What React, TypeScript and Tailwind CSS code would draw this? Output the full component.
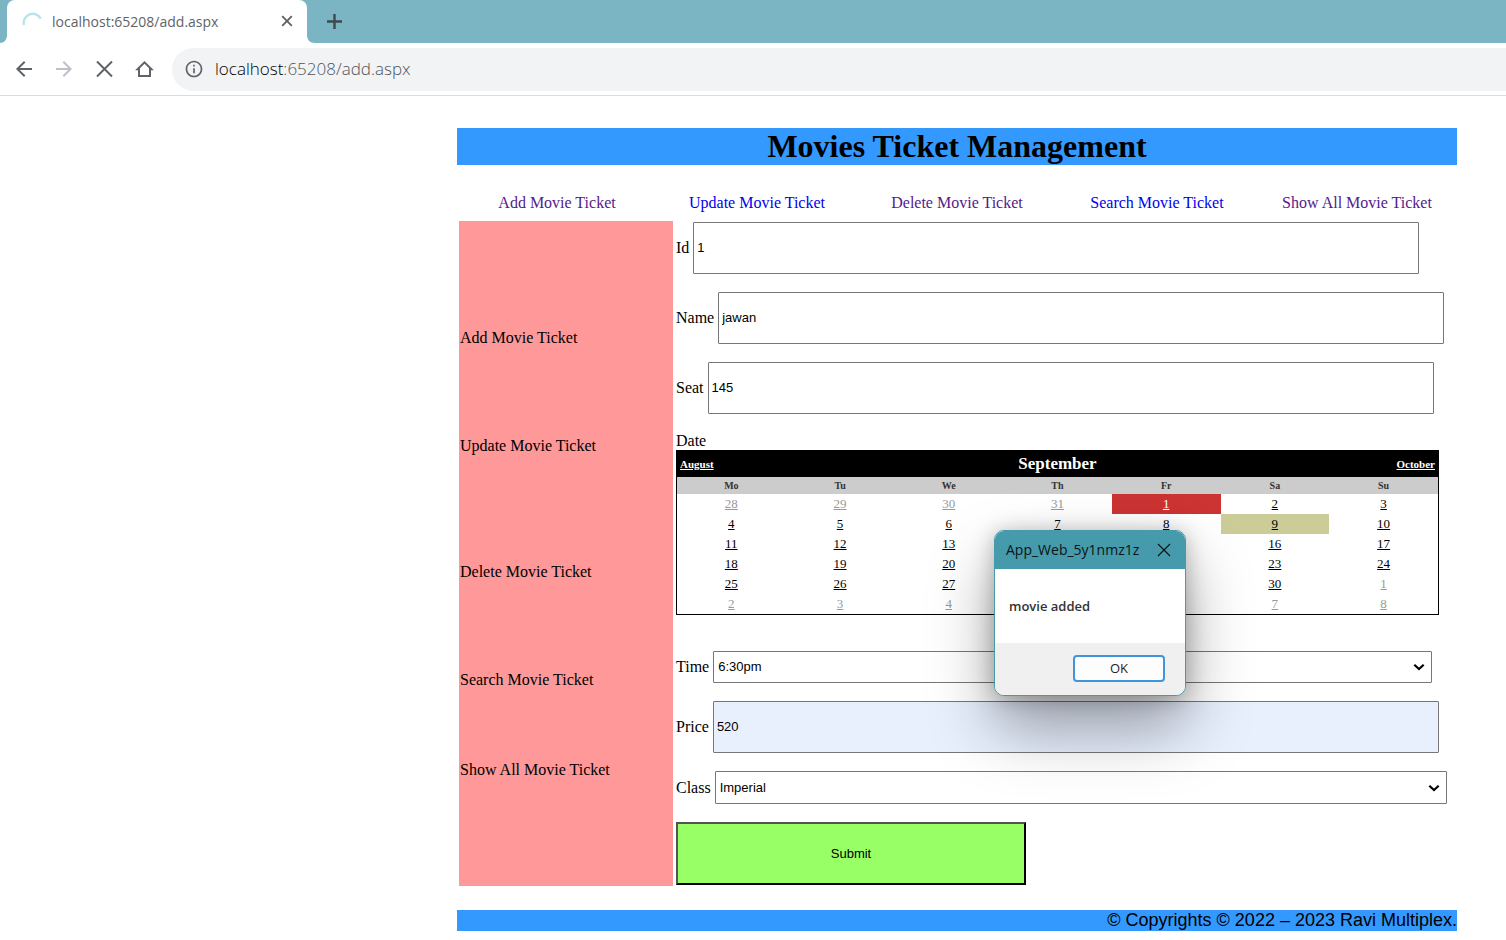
import { useId, type ReactNode } from "react";
import { MdArrowBack, MdArrowForward, MdInfoOutline } from "react-icons/md";

const serif = "font-['Liberation_Serif',serif]";
const sans = "font-['Liberation_Sans',sans-serif]";
const ui = "font-['Open_Sans',sans-serif]";

function BrowserTabs() {
  return (
    <div className="flex h-[43px] items-end bg-[#7bb5c4]">
      <svg width="7" height="8" className="shrink-0" aria-hidden="true">
        <path d="M0 8C4 8 7 5 7 0V8Z" fill="#fff" />
      </svg>
      <div className="flex h-[43px] w-[300px] shrink-0 items-center rounded-t-lg bg-white pr-3 pb-px pl-[15px]">
        <svg width="20" height="20" viewBox="0 0 20 20" fill="none" aria-hidden="true">
          <path d="M2 14A9 9 0 0 1 18.7 7.6" stroke="#b9e3ea" strokeWidth="2.4" />
        </svg>
        <span className="ml-[10px] grow text-[14px] text-[#5f6368]">localhost:65208/add.aspx</span>
        <button type="button" aria-label="Close tab" className="flex size-4 items-center justify-center">
          <svg width="12" height="12" viewBox="0 0 12 12" stroke="#5f6368" strokeWidth="1.9" aria-hidden="true">
            <path d="M1.2 1.2L10.8 10.8M10.8 1.2L1.2 10.8" />
          </svg>
        </button>
      </div>
      <svg width="8" height="8" className="shrink-0" aria-hidden="true">
        <path d="M0 0C0 5 3 8 8 8H0Z" fill="#fff" />
      </svg>
      <button type="button" aria-label="New tab" className="ml-3 flex h-[43px] w-4 items-center justify-center">
        <svg width="16" height="16" viewBox="0 0 16 16" stroke="#3c4a4e" strokeWidth="2.4" aria-hidden="true">
          <path d="M7.500 0V15M0 7.500H15" />
        </svg>
      </button>
    </div>
  );
}

function Toolbar() {
  return (
    <div className="flex h-[53px] items-center border-b border-[#dadce0] bg-white pl-3 text-[#5f6368]">
      <div className="flex shrink-0 gap-4">
        <button type="button" aria-label="Back"><MdArrowBack size={24} /></button>
        <button type="button" aria-label="Forward" className="text-[#bdc1c6]"><MdArrowForward size={24} /></button>
        <button type="button" aria-label="Stop loading">
          <svg width="24" height="24" viewBox="0 0 24 24" stroke="currentColor" strokeWidth="2" aria-hidden="true">
            <path d="M5 4.500L20 19.500M20 4.500L5 19.500" />
          </svg>
        </button>
        <button type="button" aria-label="Home">
          <svg width="24" height="24" viewBox="0 0 24 24" fill="none" stroke="currentColor" strokeWidth="2" aria-hidden="true">
            <path d="M7 12.200V19H18V12.200H19.500L12.500 5.300L5.500 12.200Z" />
          </svg>
        </button>
      </div>
      <div className="ml-4 flex h-[43px] grow items-center rounded-l-full bg-[#f1f3f4] pl-3">
        <MdInfoOutline size={20} aria-hidden="true" />
        <span className="ml-[11px] text-[17px] font-light text-[#50545a]">
          <span className="text-black">localhost</span>:65208/add.aspx
        </span>
      </div>
    </div>
  );
}

const links = [
  { text: "Add Movie Ticket", visited: true, space: "" },
  { text: "Update Movie Ticket", visited: false, space: "mt-[90px]" },
  { text: "Delete Movie Ticket", visited: true, space: "mt-[108px]" },
  { text: "Search Movie Ticket", visited: false, space: "mt-[90px]" },
  { text: "Show All Movie Ticket", visited: true, space: "mt-[72px]" },
];

function TextField({ label, value, filled }: { label: string; value: string; filled?: boolean }) {
  const id = useId();
  return (
    <div className="flex items-center gap-1">
      <label htmlFor={id}>{label}</label>
      <input
        id={id}
        defaultValue={value}
        className={`h-[52px] w-full max-w-[726px] min-w-0 rounded-[1px] border border-[#767676] px-[3px] pb-px text-[13px] ${sans} ${filled ? "bg-[#e8f0fe]" : "bg-white"}`}
      />
    </div>
  );
}

function SelectField({ label, value, size }: { label: string; value: string; size: string }) {
  const id = useId();
  return (
    <div className="flex items-center gap-1">
      <label htmlFor={id}>{label}</label>
      <div className={`relative w-full min-w-0 ${size}`}>
        <select
          id={id}
          defaultValue={value}
          className={`size-full appearance-none rounded-[1px] border border-[#767676] bg-white pr-6 pl-1 text-[13px] ${sans}`}
        >
          <option>{value}</option>
        </select>
        <svg
          viewBox="0 0 12 8"
          fill="none"
          stroke="#000"
          strokeWidth="2.2"
          className="pointer-events-none absolute inset-y-0 right-[7px] my-auto h-2 w-3"
          aria-hidden="true"
        >
          <path d="M1.300 1.700L6 6L10.700 1.700" />
        </svg>
      </div>
    </div>
  );
}

const weekdays = ["Mo", "Tu", "We", "Th", "Fr", "Sa", "Su"];
const weeks = [
  [28, 29, 30, 31, 1, 2, 3],
  [4, 5, 6, 7, 8, 9, 10],
  [11, 12, 13, 14, 15, 16, 17],
  [18, 19, 20, 21, 22, 23, 24],
  [25, 26, 27, 28, 29, 30, 1],
  [2, 3, 4, 5, 6, 7, 8],
];

function dayStyle(week: number, day: number) {
  if (week === 0 && day === 1) return "bg-[#cc3333] text-white";
  if (week === 1 && day === 9) return "bg-[#cccc99] text-black";
  if ((week === 0 && day > 20) || (week > 3 && day < 20)) return "text-[#999999]";
  return "text-black";
}

function Calendar() {
  return (
    <div className="w-full max-w-[763px] border border-black bg-white">
      <div className="grid h-[26px] grid-cols-3 items-center bg-black px-[3px] text-[11px] font-bold text-white">
        <a href="#august" className="justify-self-start underline">August</a>
        <span className="justify-self-center text-[17px]">September</span>
        <a href="#october" className="justify-self-end underline">October</a>
      </div>
      <table className="w-full table-fixed border-collapse text-center">
        <thead>
          <tr className="h-[17px] bg-[#cccccc] text-[10px] leading-[17px] text-[#333333]">
            {weekdays.map((d) => <th key={d} scope="col" className="p-0 font-bold">{d}</th>)}
          </tr>
        </thead>
        <tbody className="text-[13px] leading-5">
          {weeks.map((week, w) => (
            <tr key={w} className="h-5">
              {week.map((day) => (
                <td key={day} className={`p-0 ${dayStyle(w, day)}`}>
                  <a href="#day" className="underline">{day}</a>
                </td>
              ))}
            </tr>
          ))}
        </tbody>
      </table>
    </div>
  );
}

function MessageBox({ title, children }: { title: string; children: ReactNode }) {
  return (
    <div
      role="dialog"
      aria-label={title}
      className={`absolute top-[434px] left-[537px] w-48 overflow-hidden rounded-[10px] border border-[#459aab] bg-white shadow-[0_32px_64px_rgba(0,0,0,0.36),0_2px_21px_rgba(0,0,0,0.26)] ${ui}`}
    >
      <div className="flex h-[38px] items-center justify-between bg-[#459aab] pr-[14px] pl-[11px]">
        <span className="text-[14px] text-[#0b1416]">{title}</span>
        <button type="button" aria-label="Close">
          <svg width="14" height="14" viewBox="0 0 14 14" stroke="#0b1416" strokeWidth="1.2" aria-hidden="true">
            <path d="M1 1L13 13M13 1L1 13" />
          </svg>
        </button>
      </div>
      <p className="flex h-[74px] items-center pl-[14px] text-[13px] font-semibold text-[#333]">{children}</p>
      <div className="flex h-[52px] items-center justify-end bg-[#f0f0f0] pr-5 pb-[2px]">
        <button type="button" className="h-[27px] w-[92px] rounded-[4px] border-2 border-[#3f94dc] bg-[#fdfdfd] text-[13px] font-medium text-[#222]">
          OK
        </button>
      </div>
    </div>
  );
}

export default function App() {
  return (
    <div className="min-h-screen bg-white">
      <header className={ui}>
        <BrowserTabs />
        <Toolbar />
      </header>
      <main className={`relative mr-[49px] ml-auto w-full max-w-[1000px] pt-8 text-[16px] leading-[18px] text-black ${serif}`}>
        <h1 className="bg-[#3399ff] text-center text-[32px] leading-[37px] font-bold">Movies Ticket Management</h1>
        <nav className="mt-[29px] grid grid-cols-5 text-center">
          {links.map((l) => (
            <a key={l.text} href="#page" className={l.visited ? "text-[#551a8b]" : "text-[#0000ee]"}>{l.text}</a>
          ))}
        </nav>
        <div className="mt-[9px] flex gap-[3px] pl-[2px]">
          <aside className="w-[214px] shrink-0 bg-[#ff9999] pt-[108px] pl-px">
            {links.map((l) => <p key={l.text} className={l.space}>{l.text}</p>)}
          </aside>
          <form className="flex min-w-0 grow flex-col gap-[18px] py-px" onSubmit={(e) => e.preventDefault()}>
            <TextField label="Id" value="1" />
            <TextField label="Name" value="jawan" />
            <TextField label="Seat" value="145" />
            <div className="mb-[18px]">
              <p>Date</p>
              <Calendar />
            </div>
            <SelectField label="Time" value="6:30pm" size="h-8 max-w-[719px]" />
            <TextField label="Price" value="520" filled />
            <SelectField label="Class" value="Imperial" size="h-[33px] max-w-[732px]" />
            <button
              type="submit"
              className={`h-[63px] w-full max-w-[350px] border-2 border-black bg-[#99ff66] text-[13px] [border-style:outset] ${sans}`}
            >
              Submit
            </button>
          </form>
        </div>
        <footer className={`mt-6 bg-[#3399ff] text-right text-[18px] leading-[21px] ${sans}`}>
          © Copyrights © 2022 – 2023 Ravi Multiplex.
        </footer>
        <MessageBox title="App_Web_5y1nmz1z">movie added</MessageBox>
      </main>
    </div>
  );
}
